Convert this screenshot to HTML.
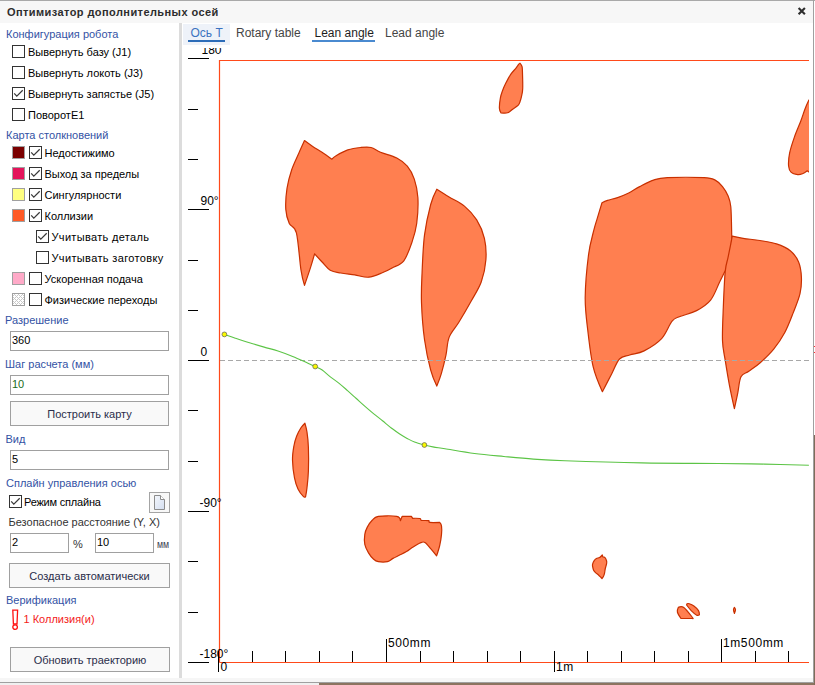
<!DOCTYPE html>
<html><head><meta charset="utf-8"><style>
html,body{margin:0;padding:0;}
body{width:815px;height:685px;position:relative;overflow:hidden;background:#fff;font-family:"Liberation Sans",sans-serif;}
.t{position:absolute;white-space:nowrap;}
.btn{position:absolute;border:1px solid #a0a0a0;background:#f9f9f9;text-align:center;font-size:11px;color:#2a2d4a;overflow:hidden;}
</style></head><body>
<div style="position:absolute;left:183px;top:48px;width:630px;height:630px;overflow:hidden;"><div style="position:absolute;left:-183px;top:-48px;width:815px;height:685px">
<svg style="position:absolute;left:0;top:0" width="815" height="685"><defs><clipPath id="pc"><rect x="220" y="61" width="589" height="601"/></clipPath></defs><g clip-path="url(#pc)" fill="#ff7f50" stroke="#c83000" stroke-width="1.2" stroke-linejoin="round"><path d="M519.90 63.20 C519.90 63.20 521.48 65.02 521.90 66.20 C522.32 67.38 522.27 66.55 522.40 70.30 C522.53 74.05 522.87 84.27 522.70 88.70 C522.53 93.13 521.87 94.68 521.40 96.90 C520.93 99.12 520.42 100.63 519.90 102.00 C519.38 103.37 519.50 103.90 518.30 105.10 C517.10 106.30 514.48 107.92 512.70 109.20 C510.92 110.48 509.55 112.20 507.60 112.80 C505.65 113.40 501.00 112.80 501.00 112.80 C501.00 112.80 499.50 110.68 499.40 108.20 C499.30 105.72 499.88 100.80 500.40 97.90 C500.92 95.00 501.63 93.18 502.50 90.80 C503.37 88.42 504.23 86.33 505.60 83.60 C506.97 80.87 509.00 76.95 510.70 74.40 C512.40 71.85 514.45 70.00 515.80 68.30 C517.15 66.60 518.12 65.05 518.80 64.20 C519.48 63.35 519.90 63.20 519.90 63.20 Z"/><path d="M304.50 140.50 C304.50 140.50 309.78 144.45 312.70 146.40 C315.62 148.35 318.80 150.07 322.00 152.20 C325.20 154.33 331.90 159.20 331.90 159.20 C331.90 159.20 333.45 157.25 336.10 155.70 C338.75 154.15 343.72 151.27 347.80 149.90 C351.88 148.53 356.72 147.90 360.60 147.50 C364.48 147.10 367.78 146.72 371.10 147.50 C374.42 148.28 376.22 150.45 380.50 152.20 C384.78 153.95 392.33 155.67 396.80 158.00 C401.27 160.33 404.38 162.68 407.30 166.20 C410.22 169.72 412.53 173.83 414.30 179.10 C416.07 184.37 417.50 190.40 417.90 197.80 C418.30 205.20 417.68 216.12 416.70 223.50 C415.72 230.88 414.15 235.88 412.00 242.10 C409.85 248.32 407.12 256.50 403.80 260.80 C400.48 265.10 395.60 265.95 392.10 267.90 C388.60 269.85 386.68 270.95 382.80 272.50 C378.92 274.05 373.47 276.80 368.80 277.20 C364.13 277.60 359.48 275.60 354.80 274.90 C350.12 274.20 344.80 273.78 340.70 273.00 C336.60 272.22 333.30 272.03 330.20 270.20 C327.10 268.37 324.70 264.73 322.10 262.00 C319.50 259.27 314.60 253.80 314.60 253.80 C314.60 253.80 312.08 262.63 310.40 267.90 C308.72 273.17 304.50 285.40 304.50 285.40 C304.50 285.40 302.35 278.97 301.00 270.20 C299.65 261.43 298.35 240.58 296.40 232.80 C294.45 225.02 291.07 227.40 289.30 223.50 C287.53 219.60 286.18 215.25 285.80 209.40 C285.42 203.55 286.02 195.02 287.00 188.40 C287.98 181.78 289.75 175.53 291.70 169.70 C293.65 163.87 296.57 158.27 298.70 153.40 C300.83 148.53 304.50 140.50 304.50 140.50 Z"/><path d="M436.80 189.20 C436.80 189.20 444.50 194.08 449.10 196.90 C453.70 199.72 459.80 202.27 464.40 206.10 C469.00 209.93 473.37 214.53 476.70 219.90 C480.03 225.27 482.87 231.65 484.40 238.30 C485.93 244.95 486.42 252.57 485.90 259.80 C485.38 267.03 483.70 274.92 481.30 281.70 C478.90 288.48 475.22 293.78 471.50 300.50 C467.78 307.22 462.72 315.90 459.00 322.00 C455.28 328.10 451.37 331.63 449.20 337.10 C447.03 342.57 447.30 348.77 446.00 354.80 C444.70 360.83 442.93 368.08 441.40 373.30 C439.87 378.52 436.80 386.10 436.80 386.10 C436.80 386.10 432.75 377.97 430.70 370.20 C428.65 362.43 426.03 350.75 424.50 339.50 C422.97 328.25 421.90 313.95 421.50 302.70 C421.10 291.45 421.60 283.25 422.10 272.00 C422.60 260.75 423.07 246.45 424.50 235.20 C425.93 223.95 428.65 212.17 430.70 204.50 C432.75 196.83 436.80 189.20 436.80 189.20 Z"/><path d="M602.00 202.80 C602.00 202.80 604.90 201.27 607.50 200.40 C610.10 199.53 614.07 198.83 617.60 197.60 C621.13 196.37 625.02 194.83 628.70 193.00 C632.38 191.17 635.57 188.75 639.70 186.60 C643.83 184.45 648.90 181.58 653.50 180.10 C658.10 178.62 658.87 178.10 667.30 177.70 C675.73 177.30 696.12 177.30 704.10 177.70 C712.08 178.10 712.13 178.62 715.20 180.10 C718.27 181.58 720.37 183.98 722.50 186.60 C724.63 189.22 726.62 192.43 728.00 195.80 C729.38 199.17 730.18 200.37 730.80 206.80 C731.42 213.23 731.57 228.87 731.70 234.40 C731.83 239.93 731.90 235.47 731.60 240.00 C731.30 244.53 731.07 256.25 729.90 261.60 C728.73 266.95 726.35 268.60 724.60 272.10 C722.85 275.60 721.73 277.93 719.40 282.60 C717.07 287.27 714.40 295.43 710.60 300.10 C706.80 304.77 701.70 307.87 696.60 310.60 C691.50 313.33 684.08 314.75 680.00 316.50 C675.92 318.25 675.17 317.42 672.10 321.10 C669.03 324.78 666.27 333.63 661.60 338.60 C656.93 343.57 649.42 348.17 644.10 350.90 C638.78 353.63 633.80 353.65 629.70 355.00 C625.60 356.35 622.53 355.80 619.50 359.00 C616.47 362.20 614.35 368.75 611.50 374.20 C608.65 379.65 602.40 391.70 602.40 391.70 C602.40 391.70 595.63 377.10 593.20 366.90 C590.77 356.70 589.13 342.05 587.80 330.50 C586.47 318.95 585.08 310.18 585.20 297.60 C585.32 285.02 587.08 266.15 588.50 255.00 C589.92 243.85 592.22 236.88 593.70 230.70 C595.18 224.52 596.02 222.55 597.40 217.90 C598.78 213.25 602.00 202.80 602.00 202.80 Z"/><path d="M732.20 236.10 C732.20 236.10 738.58 237.57 743.20 238.30 C747.82 239.03 754.35 239.57 759.90 240.50 C765.45 241.43 771.43 242.18 776.50 243.90 C781.57 245.62 786.62 247.80 790.30 250.80 C793.98 253.80 796.75 257.52 798.60 261.90 C800.45 266.28 801.17 271.80 801.40 277.10 C801.63 282.40 801.38 287.70 800.00 293.70 C798.62 299.70 795.63 306.63 793.10 313.10 C790.57 319.57 788.03 326.50 784.80 332.50 C781.57 338.50 777.85 344.02 773.70 349.10 C769.55 354.18 764.05 359.30 759.90 363.00 C755.75 366.70 751.95 369.00 748.80 371.30 C745.65 373.60 742.85 373.12 741.00 376.80 C739.15 380.48 738.80 388.08 737.70 393.40 C736.60 398.72 734.40 408.70 734.40 408.70 C734.40 408.70 730.93 393.18 729.40 385.10 C727.87 377.02 726.35 367.58 725.20 360.20 C724.05 352.82 722.82 349.57 722.50 340.80 C722.18 332.03 722.85 319.13 723.30 307.60 C723.75 296.07 724.42 279.92 725.20 271.60 C725.98 263.28 727.07 262.32 728.00 257.70 C728.93 253.08 730.10 247.50 730.80 243.90 C731.50 240.30 732.20 236.10 732.20 236.10 Z"/><path d="M808.90 100.10 C808.90 100.10 812.00 97.00 812.00 97.00 C812.00 97.00 813.00 175.00 813.00 175.00 C813.00 175.00 807.30 170.80 807.30 170.80 C807.30 170.80 804.12 173.17 802.50 173.80 C800.88 174.43 799.48 174.83 797.60 174.60 C795.72 174.37 792.70 173.83 791.20 172.40 C789.70 170.97 788.87 169.22 788.60 166.00 C788.33 162.78 788.63 157.92 789.60 153.10 C790.57 148.28 792.53 142.45 794.40 137.10 C796.27 131.75 799.03 125.68 800.80 121.00 C802.57 116.32 803.65 112.48 805.00 109.00 C806.35 105.52 808.90 100.10 808.90 100.10 Z"/><path d="M304.90 423.20 C304.90 423.20 306.42 428.17 307.00 432.20 C307.58 436.23 308.17 440.95 308.40 447.40 C308.63 453.85 308.63 464.20 308.40 470.90 C308.17 477.60 307.47 483.32 307.00 487.60 C306.53 491.88 305.60 496.60 305.60 496.60 C305.60 496.60 304.77 497.88 303.50 496.60 C302.23 495.32 299.50 492.02 298.00 488.90 C296.50 485.78 295.42 482.73 294.50 477.90 C293.58 473.07 292.60 465.22 292.50 459.90 C292.40 454.58 293.22 449.93 293.90 446.00 C294.58 442.07 295.45 439.30 296.60 436.30 C297.75 433.30 299.42 430.18 300.80 428.00 C302.18 425.82 304.90 423.20 304.90 423.20 Z"/><path d="M378.30 516.30 C382.38 515.63 393.02 515.57 396.70 516.30 C400.38 517.03 400.40 520.70 400.40 520.70 C400.40 520.70 402.20 516.30 402.20 516.30 C402.20 516.30 411.40 516.30 411.40 516.30 C411.40 516.30 412.70 518.30 412.70 518.30 C412.70 518.30 418.57 518.17 420.00 518.50 C421.43 518.83 419.87 519.93 421.30 520.30 C422.73 520.67 427.18 520.35 428.60 520.70 C430.02 521.05 427.95 522.12 429.80 522.40 C431.65 522.68 439.70 522.40 439.70 522.40 C439.70 522.40 441.20 523.90 441.50 525.90 C441.80 527.90 441.80 531.13 441.50 534.40 C441.20 537.67 440.52 541.92 439.70 545.50 C438.88 549.08 436.60 555.90 436.60 555.90 C436.60 555.90 433.05 551.45 431.10 549.20 C429.15 546.95 426.75 543.43 424.90 542.40 C423.05 541.37 422.03 542.18 420.00 543.00 C417.97 543.82 414.95 545.87 412.70 547.30 C410.45 548.73 408.75 550.27 406.50 551.60 C404.25 552.93 401.45 554.17 399.20 555.30 C396.95 556.43 394.95 557.33 393.00 558.40 C391.05 559.47 389.95 561.15 387.50 561.70 C385.05 562.25 380.65 562.15 378.30 561.70 C375.95 561.25 375.03 560.47 373.40 559.00 C371.77 557.53 369.93 555.35 368.50 552.90 C367.07 550.45 365.42 547.38 364.80 544.30 C364.18 541.22 364.38 537.27 364.80 534.40 C365.22 531.53 366.07 529.45 367.30 527.10 C368.53 524.75 370.37 522.10 372.20 520.30 C374.03 518.50 374.22 516.97 378.30 516.30 Z"/><path d="M602.30 555.00 C602.30 555.00 602.80 556.90 602.80 556.90 C602.80 556.90 604.37 557.02 605.00 557.70 C605.63 558.38 606.33 560.00 606.60 561.00 C606.87 562.00 606.82 562.45 606.60 563.70 C606.38 564.95 605.65 566.88 605.30 568.50 C604.95 570.12 604.82 572.05 604.50 573.40 C604.18 574.75 603.82 575.75 603.40 576.60 C602.98 577.45 602.00 578.50 602.00 578.50 C602.00 578.50 601.28 577.78 600.70 577.20 C600.12 576.62 599.32 575.72 598.50 575.00 C597.68 574.28 596.62 573.70 595.80 572.90 C594.98 572.10 594.13 571.28 593.60 570.20 C593.07 569.12 592.77 567.40 592.60 566.40 C592.43 565.40 592.33 565.15 592.60 564.20 C592.87 563.25 593.57 561.65 594.20 560.70 C594.83 559.75 595.50 559.03 596.40 558.50 C597.30 557.97 598.62 558.08 599.60 557.50 C600.58 556.92 602.30 555.00 602.30 555.00 Z"/><path d="M678.30 607.40 C678.30 607.40 681.43 605.72 683.80 607.40 C686.17 609.08 691.05 615.65 692.50 617.50 C693.95 619.35 692.50 618.50 692.50 618.50 C692.50 618.50 681.00 618.50 681.00 618.50 C681.00 618.50 677.85 613.85 677.40 612.00 C676.95 610.15 678.30 607.40 678.30 607.40 Z"/><path d="M687.00 603.70 C687.00 603.70 688.15 603.32 689.30 603.70 C690.45 604.08 692.37 604.85 693.90 606.00 C695.43 607.15 697.58 609.13 698.50 610.60 C699.42 612.07 699.40 614.80 699.40 614.80 C699.40 614.80 698.07 615.90 696.70 615.20 C695.33 614.50 692.88 612.30 691.20 610.60 C689.52 608.90 686.60 605.00 686.60 605.00 C686.60 605.00 687.00 603.70 687.00 603.70 Z"/><path d="M734.40 607.40 C734.40 607.40 735.50 608.70 735.50 609.70 C735.50 610.70 734.40 613.40 734.40 613.40 C734.40 613.40 733.50 610.70 733.50 609.70 C733.50 608.70 734.40 607.40 734.40 607.40 Z"/></g><path d="M220 360.5 H809" stroke="#a8a8a8" stroke-width="1" stroke-dasharray="5 3"/><path d="M224.4 334.4 C226.12 334.98 230.52 336.52 234.7 337.9 C238.88 339.28 244.58 341.17 249.5 342.7 C254.42 344.23 259.45 345.73 264.2 347.1 C268.95 348.47 273.25 349.35 278 350.9 C282.75 352.45 287.78 354.38 292.7 356.4 C297.62 358.42 303.75 361.32 307.5 363 C311.25 364.68 312.75 365.33 315.2 366.5 C317.65 367.67 319.73 368.32 322.2 370 C324.67 371.68 327.23 374.42 330 376.6 C332.77 378.78 335.88 380.77 338.8 383.1 C341.72 385.43 344.58 388.03 347.5 390.6 C350.42 393.17 353.38 395.88 356.3 398.5 C359.22 401.12 362.08 403.75 365 406.3 C367.92 408.85 370.88 411.38 373.8 413.8 C376.72 416.22 379.40 418.30 382.5 420.8 C385.60 423.30 389.53 426.60 392.4 428.8 C395.27 431.00 397.25 432.40 399.7 434 C402.15 435.60 404.63 437.05 407.1 438.4 C409.57 439.75 411.62 441.00 414.5 442.1 C417.38 443.20 421.33 444.20 424.4 445 C427.47 445.80 429.47 446.27 432.9 446.9 C436.33 447.53 438.07 447.70 445 448.8 C451.93 449.90 464.68 452.22 474.5 453.5 C484.32 454.78 494.08 455.57 503.9 456.5 C513.72 457.43 523.22 458.38 533.4 459.1 C543.58 459.82 546.95 460.17 565 460.8 C583.05 461.43 616.13 462.45 641.7 462.9 C667.27 463.35 697.95 463.30 718.4 463.5 C738.85 463.70 749.32 463.80 764.4 464.1 C779.48 464.40 801.48 465.10 808.9 465.3" fill="none" stroke="#5cc446" stroke-width="1.1"/><circle cx="224.4" cy="334.4" r="2.4" fill="#f8f800" stroke="#6c6c58" stroke-width="0.8"/><circle cx="315.2" cy="366.5" r="2.4" fill="#f8f800" stroke="#6c6c58" stroke-width="0.8"/><circle cx="424.4" cy="445" r="2.4" fill="#f8f800" stroke="#6c6c58" stroke-width="0.8"/><path d="M219.5 662.5 V60.5 H809" fill="none" stroke="#ff4a1a" stroke-width="1.2"/><path d="M219.5 662.5 H809" fill="none" stroke="#ff4a1a" stroke-width="1.2"/><path d="M188 58.5 H209" stroke="#000" stroke-width="1"/><path d="M188 109.5 H198" stroke="#000" stroke-width="1"/><path d="M188 159.5 H198" stroke="#000" stroke-width="1"/><path d="M188 209.5 H209" stroke="#000" stroke-width="1"/><path d="M188 260.5 H198" stroke="#000" stroke-width="1"/><path d="M188 310.5 H198" stroke="#000" stroke-width="1"/><path d="M188 360.5 H209" stroke="#000" stroke-width="1"/><path d="M188 410.5 H198" stroke="#000" stroke-width="1"/><path d="M188 461.5 H198" stroke="#000" stroke-width="1"/><path d="M188 511.5 H209" stroke="#000" stroke-width="1"/><path d="M188 561.5 H198" stroke="#000" stroke-width="1"/><path d="M188 612.5 H198" stroke="#000" stroke-width="1"/><path d="M188 662.5 H209" stroke="#000" stroke-width="1"/><path d="M218.5 651 V672" stroke="#000" stroke-width="1"/><path d="M252.5 651 V662" stroke="#000" stroke-width="1"/><path d="M285.5 651 V662" stroke="#000" stroke-width="1"/><path d="M319.5 651 V662" stroke="#000" stroke-width="1"/><path d="M352.5 651 V662" stroke="#000" stroke-width="1"/><path d="M386.5 639 V662" stroke="#000" stroke-width="1"/><path d="M420.5 651 V662" stroke="#000" stroke-width="1"/><path d="M453.5 651 V662" stroke="#000" stroke-width="1"/><path d="M487.5 651 V662" stroke="#000" stroke-width="1"/><path d="M520.5 651 V662" stroke="#000" stroke-width="1"/><path d="M554.5 651 V672" stroke="#000" stroke-width="1"/><path d="M587.5 651 V662" stroke="#000" stroke-width="1"/><path d="M621.5 651 V662" stroke="#000" stroke-width="1"/><path d="M654.5 651 V662" stroke="#000" stroke-width="1"/><path d="M688.5 651 V662" stroke="#000" stroke-width="1"/><path d="M721.5 639 V662" stroke="#000" stroke-width="1"/><path d="M755.5 651 V662" stroke="#000" stroke-width="1"/><path d="M788.5 651 V662" stroke="#000" stroke-width="1"/></svg>
<div class="t" style="left:201.5px;top:44.44px;font-size:12px;line-height:12px;color:#000;">180</div>
<div class="t" style="left:200.5px;top:195.14px;font-size:12px;line-height:12px;color:#000;">90°</div>
<div class="t" style="left:200.5px;top:345.84px;font-size:12px;line-height:12px;color:#000;">0</div>
<div class="t" style="left:199.5px;top:496.84px;font-size:12px;line-height:12px;color:#000;">-90°</div>
<div class="t" style="left:199.5px;top:648.34px;font-size:12px;line-height:12px;color:#000;">-180°</div>
<div class="t" style="left:220.5px;top:660.84px;font-size:12px;line-height:12px;color:#000;">0</div>
<div class="t" style="left:388px;top:637.14px;font-size:12px;line-height:12px;color:#000;letter-spacing:0.6px">500mm</div>
<div class="t" style="left:556px;top:661.14px;font-size:12px;line-height:12px;color:#000;letter-spacing:0.6px">1m</div>
<div class="t" style="left:723px;top:637.14px;font-size:12px;line-height:12px;color:#000;letter-spacing:0.6px">1m500mm</div>

</div></div>
<div style="position:absolute;left:0px;top:0px;width:815px;height:1px;background:#a9a9a9"></div>
<div style="position:absolute;left:0px;top:1px;width:813px;height:22px;background:#f7f7f7"></div>
<div style="position:absolute;left:813px;top:0px;width:1px;height:683px;background:#a0a0a0"></div>
<div class="t" style="left:7px;top:6.69px;font-size:11px;line-height:11px;color:#2d2d2d;font-weight:bold;letter-spacing:0.42px">Оптимизатор дополнительных осей</div>
<svg style="position:absolute;left:797px;top:7px" width="10" height="9"><path d="M1.6 0.9 L7.9 7.2 M7.9 0.9 L1.6 7.2" stroke="#2e2e2e" stroke-width="2.1"/></svg>
<div style="position:absolute;left:0px;top:678px;width:813px;height:4px;background:#f6f6f6"></div>
<div style="position:absolute;left:0px;top:682px;width:813px;height:1px;background:#a0a0a0"></div>
<div style="position:absolute;left:0px;top:683px;width:815px;height:2px;background:#f0f0f0"></div>
<div style="position:absolute;left:319px;top:683px;width:496px;height:2px;background:#8c7460"></div>
<div style="position:absolute;left:814px;top:435px;width:1px;height:250px;background:#7f6c5a"></div>
<div style="position:absolute;left:814px;top:346px;width:1px;height:1px;background:#ff3030"></div>
<div style="position:absolute;left:814px;top:352px;width:1px;height:1px;background:#ff3030"></div>
<div style="position:absolute;left:179px;top:23px;width:3px;height:655px;background:#dcdcdc"></div>
<div class="t" style="left:6px;top:28.69px;font-size:11px;line-height:11px;color:#3352a4;">Конфигурация робота</div>
<div style="position:absolute;left:12px;top:45px;width:11px;height:11px;border:1px solid #333;background:#fff"></div>
<div class="t" style="left:28px;top:46.69px;font-size:11px;line-height:11px;color:#000;">Вывернуть базу (J1)</div>
<div style="position:absolute;left:12px;top:66px;width:11px;height:11px;border:1px solid #333;background:#fff"></div>
<div class="t" style="left:28px;top:67.69px;font-size:11px;line-height:11px;color:#000;">Вывернуть локоть (J3)</div>
<div style="position:absolute;left:12px;top:87px;width:11px;height:11px;border:1px solid #333;background:#fff"><svg width="13" height="13" style="position:absolute;left:-1px;top:-1px"><path d="M2.2 6.4 L4.8 9.1 L10.7 3.3" fill="none" stroke="#3a3a3a" stroke-width="1.25"/></svg></div>
<div class="t" style="left:28px;top:88.69px;font-size:11px;line-height:11px;color:#000;">Вывернуть запястье (J5)</div>
<div style="position:absolute;left:12px;top:108px;width:11px;height:11px;border:1px solid #333;background:#fff"></div>
<div class="t" style="left:28px;top:109.69px;font-size:11px;line-height:11px;color:#000;">ПоворотE1</div>
<div class="t" style="left:6px;top:129.69px;font-size:11px;line-height:11px;color:#3352a4;">Карта столкновений</div>
<div style="position:absolute;left:12px;top:146px;width:11px;height:11px;border:1px solid #a0a0a0;background:#7b0000;"></div>
<div style="position:absolute;left:29px;top:146px;width:11px;height:11px;border:1px solid #333;background:#fff"><svg width="13" height="13" style="position:absolute;left:-1px;top:-1px"><path d="M2.2 6.4 L4.8 9.1 L10.7 3.3" fill="none" stroke="#3a3a3a" stroke-width="1.25"/></svg></div>
<div class="t" style="left:44.5px;top:147.69px;font-size:11px;line-height:11px;color:#000;">Недостижимо</div>
<div style="position:absolute;left:12px;top:167px;width:11px;height:11px;border:1px solid #a0a0a0;background:#e4135a;"></div>
<div style="position:absolute;left:29px;top:167px;width:11px;height:11px;border:1px solid #333;background:#fff"><svg width="13" height="13" style="position:absolute;left:-1px;top:-1px"><path d="M2.2 6.4 L4.8 9.1 L10.7 3.3" fill="none" stroke="#3a3a3a" stroke-width="1.25"/></svg></div>
<div class="t" style="left:44.5px;top:168.69px;font-size:11px;line-height:11px;color:#000;">Выход за пределы</div>
<div style="position:absolute;left:12px;top:188px;width:11px;height:11px;border:1px solid #a0a0a0;background:#ffff80;"></div>
<div style="position:absolute;left:29px;top:188px;width:11px;height:11px;border:1px solid #333;background:#fff"><svg width="13" height="13" style="position:absolute;left:-1px;top:-1px"><path d="M2.2 6.4 L4.8 9.1 L10.7 3.3" fill="none" stroke="#3a3a3a" stroke-width="1.25"/></svg></div>
<div class="t" style="left:44.5px;top:189.69px;font-size:11px;line-height:11px;color:#000;">Сингулярности</div>
<div style="position:absolute;left:12px;top:209px;width:11px;height:11px;border:1px solid #a0a0a0;background:#ff5a26;"></div>
<div style="position:absolute;left:29px;top:209px;width:11px;height:11px;border:1px solid #333;background:#fff"><svg width="13" height="13" style="position:absolute;left:-1px;top:-1px"><path d="M2.2 6.4 L4.8 9.1 L10.7 3.3" fill="none" stroke="#3a3a3a" stroke-width="1.25"/></svg></div>
<div class="t" style="left:44.5px;top:210.69px;font-size:11px;line-height:11px;color:#000;">Коллизии</div>
<div style="position:absolute;left:36px;top:230px;width:11px;height:11px;border:1px solid #333;background:#fff"><svg width="13" height="13" style="position:absolute;left:-1px;top:-1px"><path d="M2.2 6.4 L4.8 9.1 L10.7 3.3" fill="none" stroke="#3a3a3a" stroke-width="1.25"/></svg></div>
<div class="t" style="left:51.5px;top:231.69px;font-size:11px;line-height:11px;color:#000;letter-spacing:0.33px">Учитывать деталь</div>
<div style="position:absolute;left:36px;top:251px;width:11px;height:11px;border:1px solid #333;background:#fff"></div>
<div class="t" style="left:51.5px;top:252.69px;font-size:11px;line-height:11px;color:#000;letter-spacing:0.36px">Учитывать заготовку</div>
<div style="position:absolute;left:12px;top:272px;width:11px;height:11px;border:1px solid #a0a0a0;background:#ffaac8;"></div>
<div style="position:absolute;left:29px;top:272px;width:11px;height:11px;border:1px solid #333;background:#fff"></div>
<div class="t" style="left:44.5px;top:273.69px;font-size:11px;line-height:11px;color:#000;">Ускоренная подача</div>
<div style="position:absolute;left:12px;top:293px;width:11px;height:11px;border:1px solid #a0a0a0;background:#fff;"></div>
<svg style="position:absolute;left:13px;top:294px" width="11" height="11"><g fill="#c8c8c8"><rect x="0" y="1" width="1" height="1"/><rect x="0" y="3" width="1" height="1"/><rect x="0" y="5" width="1" height="1"/><rect x="0" y="7" width="1" height="1"/><rect x="0" y="9" width="1" height="1"/><rect x="1" y="0" width="1" height="1"/><rect x="1" y="4" width="1" height="1"/><rect x="1" y="8" width="1" height="1"/><rect x="2" y="1" width="1" height="1"/><rect x="2" y="3" width="1" height="1"/><rect x="2" y="5" width="1" height="1"/><rect x="2" y="7" width="1" height="1"/><rect x="2" y="9" width="1" height="1"/><rect x="3" y="2" width="1" height="1"/><rect x="3" y="6" width="1" height="1"/><rect x="3" y="10" width="1" height="1"/><rect x="4" y="1" width="1" height="1"/><rect x="4" y="3" width="1" height="1"/><rect x="4" y="5" width="1" height="1"/><rect x="4" y="7" width="1" height="1"/><rect x="4" y="9" width="1" height="1"/><rect x="5" y="0" width="1" height="1"/><rect x="5" y="4" width="1" height="1"/><rect x="5" y="8" width="1" height="1"/><rect x="6" y="1" width="1" height="1"/><rect x="6" y="3" width="1" height="1"/><rect x="6" y="5" width="1" height="1"/><rect x="6" y="7" width="1" height="1"/><rect x="6" y="9" width="1" height="1"/><rect x="7" y="2" width="1" height="1"/><rect x="7" y="6" width="1" height="1"/><rect x="7" y="10" width="1" height="1"/><rect x="8" y="1" width="1" height="1"/><rect x="8" y="3" width="1" height="1"/><rect x="8" y="5" width="1" height="1"/><rect x="8" y="7" width="1" height="1"/><rect x="8" y="9" width="1" height="1"/><rect x="9" y="0" width="1" height="1"/><rect x="9" y="4" width="1" height="1"/><rect x="9" y="8" width="1" height="1"/><rect x="10" y="1" width="1" height="1"/><rect x="10" y="3" width="1" height="1"/><rect x="10" y="5" width="1" height="1"/><rect x="10" y="7" width="1" height="1"/><rect x="10" y="9" width="1" height="1"/></g></svg>
<div style="position:absolute;left:29px;top:293px;width:11px;height:11px;border:1px solid #333;background:#fff"></div>
<div class="t" style="left:44.5px;top:294.69px;font-size:11px;line-height:11px;color:#000;">Физические переходы</div>
<div class="t" style="left:5px;top:314.69px;font-size:11px;line-height:11px;color:#3352a4;">Разрешение</div>
<div style="position:absolute;left:10px;top:331px;width:157px;height:18px;border:1px solid #a0a0a0;background:#fff"></div>
<div class="t" style="left:12px;top:334.69px;font-size:11px;line-height:11px;color:#000;">360</div>
<div class="t" style="left:5px;top:358.69px;font-size:11px;line-height:11px;color:#3352a4;">Шаг расчета (мм)</div>
<div style="position:absolute;left:10px;top:375px;width:157px;height:18px;border:1px solid #a0a0a0;background:#fff"></div>
<div class="t" style="left:12px;top:378.69px;font-size:11px;line-height:11px;color:#1b6b1b;">10</div>
<div class="btn" style="left:10px;top:401px;width:157px;height:23px;line-height:25px">Построить карту</div>
<div class="t" style="left:5.5px;top:434.19px;font-size:11px;line-height:11px;color:#3352a4;">Вид</div>
<div style="position:absolute;left:10px;top:450px;width:157px;height:18px;border:1px solid #a0a0a0;background:#fff"></div>
<div class="t" style="left:12px;top:453.69px;font-size:11px;line-height:11px;color:#000;">5</div>
<div class="t" style="left:6px;top:477.69px;font-size:11px;line-height:11px;color:#3352a4;">Сплайн управления осью</div>
<div style="position:absolute;left:9px;top:495px;width:11px;height:11px;border:1px solid #333;background:#fff"><svg width="13" height="13" style="position:absolute;left:-1px;top:-1px"><path d="M2.2 6.4 L4.8 9.1 L10.7 3.3" fill="none" stroke="#3a3a3a" stroke-width="1.25"/></svg></div>
<div class="t" style="left:24px;top:496.69px;font-size:11px;line-height:11px;color:#000;letter-spacing:-0.2px">Режим сплайна</div>
<div style="position:absolute;left:149px;top:492px;width:19px;height:19px;border:1px solid #a4a4a4;background:#f8f8f8"></div>
<svg style="position:absolute;left:154px;top:495px" width="12" height="16"><defs><linearGradient id="dg" x1="0" y1="0" x2="1" y2="1"><stop offset="0" stop-color="#f4f7fc"/><stop offset="1" stop-color="#d4def0"/></linearGradient></defs><path d="M0.5 0.5 H6.5 L10.5 4.5 V14.5 H0.5 Z" fill="url(#dg)" stroke="#8c8c8c" stroke-width="1"/><path d="M6.5 0.5 V4.5 H10.5" fill="#fff" stroke="#8c8c8c" stroke-width="1"/></svg>
<div class="t" style="left:8.5px;top:517.19px;font-size:11px;line-height:11px;color:#333;">Безопасное расстояние (Y, X)</div>
<div style="position:absolute;left:10px;top:533px;width:57px;height:18px;border:1px solid #a0a0a0;background:#fff"></div>
<div class="t" style="left:12px;top:536.69px;font-size:11px;line-height:11px;color:#000;">2</div>
<div class="t" style="left:73px;top:538.69px;font-size:11px;line-height:11px;color:#333;">%</div>
<div style="position:absolute;left:95px;top:533px;width:57px;height:18px;border:1px solid #a0a0a0;background:#fff"></div>
<div class="t" style="left:97px;top:536.69px;font-size:11px;line-height:11px;color:#000;">10</div>
<div class="t" style="left:156.5px;top:538.69px;font-size:11px;line-height:11px;color:#3c3c52;transform:scaleX(0.8);transform-origin:0 0">мм</div>
<div class="btn" style="left:9px;top:563px;width:159px;height:23px;line-height:25px">Создать автоматически</div>
<div class="t" style="left:6px;top:594.69px;font-size:11px;line-height:11px;color:#3352a4;">Верификация</div>
<svg style="position:absolute;left:10px;top:609px" width="10" height="22"><path d="M2.8 1.2 H7.6 L7 15 H3.4 Z" fill="#fff" stroke="#ff1010" stroke-width="1.3"/><circle cx="5.1" cy="18.1" r="2.3" fill="#fff" stroke="#ff1010" stroke-width="1.3"/></svg>
<div class="t" style="left:23.5px;top:613.69px;font-size:11px;line-height:11px;color:#f41a1a;">1 Коллизия(и)</div>
<div class="btn" style="left:10px;top:647px;width:158px;height:23px;line-height:25px">Обновить траекторию</div>
<div style="position:absolute;left:183px;top:24px;width:47px;height:21px;background:#eef2f9"></div>
<div class="t" style="left:190.5px;top:26.84px;font-size:12px;line-height:12px;color:#3c72c0;">Ось T</div>
<div style="position:absolute;left:188px;top:40px;width:37px;height:2px;background:#2c6cb8"></div>
<div class="t" style="left:236px;top:26.84px;font-size:12px;line-height:12px;color:#454545;">Rotary table</div>
<div class="t" style="left:314.5px;top:26.84px;font-size:12px;line-height:12px;color:#1e1e1e;">Lean angle</div>
<div style="position:absolute;left:312px;top:40px;width:63px;height:2px;background:#4a8ad0"></div>
<div class="t" style="left:385px;top:26.84px;font-size:12px;line-height:12px;color:#454545;">Lead angle</div>

</body></html>
